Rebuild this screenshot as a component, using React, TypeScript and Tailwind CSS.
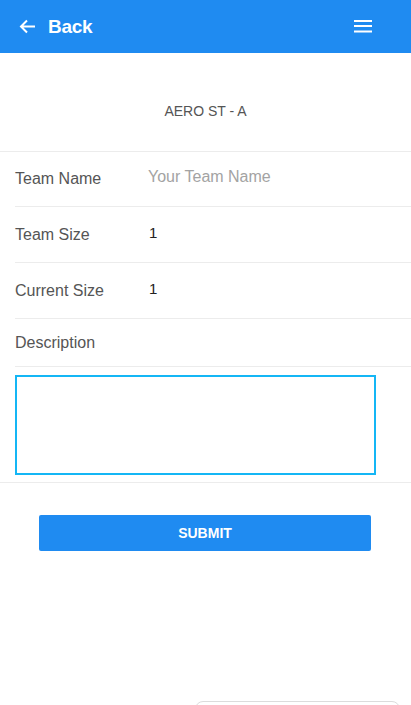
import React from "react";

const rows = [
  { label: "Team Name", value: "", placeholder: "Your Team Name" },
  { label: "Team Size", value: "1" },
  { label: "Current Size", value: "1" },
];

export default function App() {
  return (
    <div
      className="min-h-screen bg-white"
      style={{ fontFamily: '"Liberation Sans", Arial, sans-serif' }}
    >
      {/* Top bar */}
      <header className="h-[53px] bg-[#1f8bf1] flex items-center justify-between pl-[19px] pr-[39px]">
        <div className="flex items-center gap-[12px]">
          <svg width="17" height="15" viewBox="0 0 17 15" fill="none">
            <path
              d="M16 7.5H2M8 1.5L2 7.5L8 13.5"
              stroke="white"
              strokeWidth="2"
            />
          </svg>
          <span className="text-white font-bold text-[19px] tracking-[-0.3px] leading-none">
            Back
          </span>
        </div>
        <svg width="18" height="13" viewBox="0 0 18 13">
          <rect x="0" y="0" width="18" height="2" fill="white" />
          <rect x="0" y="5" width="18" height="2" fill="white" />
          <rect x="0" y="10.5" width="18" height="2" fill="white" />
        </svg>
      </header>

      {/* Title */}
      <div className="h-[99px] border-b border-[#ececec] flex justify-center pt-[48px]">
        <span className="text-[14px] leading-[20px] text-[#555]">AERO ST - A</span>
      </div>

      {/* Fields */}
      {rows.map((row, i) => (
        <div
          key={row.label}
          className={`${i === 0 ? "h-[55px]" : "h-[56px]"} ml-[15px] border-b border-[#ececec] flex items-center`}
        >
          <span className="w-[133px] text-[16px] text-[#555]">{row.label}</span>
          {row.placeholder ? (
            <span className="text-[16px] text-[#a3a3a3] -mt-[4px]">{row.placeholder}</span>
          ) : (
            <span className="text-[15px] text-[#222] pl-[1px] -mt-[3px]">{row.value}</span>
          )}
        </div>
      ))}

      <div className="h-[48px] ml-[15px] border-b border-[#ececec] flex items-center">
        <span className="text-[16px] text-[#555]">Description</span>
      </div>

      <div className="border-b border-[#ececec] pt-[8px] pb-[7px] pl-[15px]">
        <div className="w-[361px] h-[100px] border-2 border-[#14b6f5]" />
      </div>

      {/* Submit */}
      <div className="pt-[32px] pl-[39px]">
        <button className="w-[332px] h-[36px] bg-[#1f8bf1] rounded-[2px] text-white font-bold text-[14px]">
          SUBMIT
        </button>
      </div>

      <div className="mt-[150px] ml-[195px] w-[205px] h-[44px] border border-[#dcdcdc] rounded-lg bg-white" />
    </div>
  );
}
